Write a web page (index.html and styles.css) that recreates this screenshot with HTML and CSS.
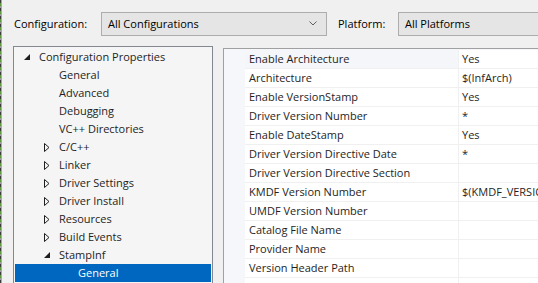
FILE: index.html
```html
<!DOCTYPE html>
<html lang="en">
<head>
  <meta charset="UTF-8">
  <title>Property Pages</title>
  <link rel="stylesheet" href="styles.css">
</head>
<body>

<div class="window">
  <div class="edge"></div>

  <div class="main">
    <div class="toolbar">
      <span class="label label-config">Configuration:</span>
      <div class="combo combo-config">
        <span>All Configurations</span>
        <svg class="chevron" width="8" height="5" viewBox="0 0 8 5">
          <polyline points="0.5,0.5 4,4 7.5,0.5" fill="none" stroke="#606060" stroke-width="1"/>
        </svg>
      </div>
      <span class="label label-platform">Platform:</span>
      <div class="combo combo-platform">
        <span>All Platforms</span>
      </div>
    </div>

    <div class="panes">
      <div class="tree">
        <div class="node lvl0"><span class="glyph"><svg width="6" height="6" viewBox="0 0 6 6"><polygon points="6,0 6,6 0,6" fill="#1e1e1e"/></svg></span>Configuration Properties</div>
        <div class="node lvl1"><span class="glyph"></span>General</div>
        <div class="node lvl1"><span class="glyph"></span>Advanced</div>
        <div class="node lvl1"><span class="glyph"></span>Debugging</div>
        <div class="node lvl1"><span class="glyph"></span>VC++ Directories</div>
        <div class="node lvl1"><span class="glyph"><svg width="6" height="9" viewBox="0 0 6 9"><polygon points="0.5,0.5 5,4.5 0.5,8.5" fill="none" stroke="#1e1e1e" stroke-width="1"/></svg></span>C/C++</div>
        <div class="node lvl1"><span class="glyph"><svg width="6" height="9" viewBox="0 0 6 9"><polygon points="0.5,0.5 5,4.5 0.5,8.5" fill="none" stroke="#1e1e1e" stroke-width="1"/></svg></span>Linker</div>
        <div class="node lvl1"><span class="glyph"><svg width="6" height="9" viewBox="0 0 6 9"><polygon points="0.5,0.5 5,4.5 0.5,8.5" fill="none" stroke="#1e1e1e" stroke-width="1"/></svg></span>Driver Settings</div>
        <div class="node lvl1"><span class="glyph"><svg width="6" height="9" viewBox="0 0 6 9"><polygon points="0.5,0.5 5,4.5 0.5,8.5" fill="none" stroke="#1e1e1e" stroke-width="1"/></svg></span>Driver Install</div>
        <div class="node lvl1"><span class="glyph"><svg width="6" height="9" viewBox="0 0 6 9"><polygon points="0.5,0.5 5,4.5 0.5,8.5" fill="none" stroke="#1e1e1e" stroke-width="1"/></svg></span>Resources</div>
        <div class="node lvl1"><span class="glyph"><svg width="6" height="9" viewBox="0 0 6 9"><polygon points="0.5,0.5 5,4.5 0.5,8.5" fill="none" stroke="#1e1e1e" stroke-width="1"/></svg></span>Build Events</div>
        <div class="node lvl1"><span class="glyph"><svg width="6" height="6" viewBox="0 0 6 6"><polygon points="6,0 6,6 0,6" fill="#1e1e1e"/></svg></span>StampInf</div>
        <div class="node lvl2 selected"><span class="glyph"></span>General</div>
      </div>

      <div class="grid">
        <div class="row first"><div class="name">Enable Architecture</div><div class="value">Yes</div></div>
        <div class="row"><div class="name">Architecture</div><div class="value">$(InfArch)</div></div>
        <div class="row"><div class="name">Enable VersionStamp</div><div class="value">Yes</div></div>
        <div class="row"><div class="name">Driver Version Number</div><div class="value">*</div></div>
        <div class="row"><div class="name">Enable DateStamp</div><div class="value">Yes</div></div>
        <div class="row"><div class="name">Driver Version Directive Date</div><div class="value">*</div></div>
        <div class="row"><div class="name">Driver Version Directive Section</div><div class="value"></div></div>
        <div class="row"><div class="name">KMDF Version Number</div><div class="value">$(KMDF_VERSION_MAJOR).$(KMDF_VERSION_MINOR)</div></div>
        <div class="row"><div class="name">UMDF Version Number</div><div class="value"></div></div>
        <div class="row"><div class="name">Catalog File Name</div><div class="value"></div></div>
        <div class="row"><div class="name">Provider Name</div><div class="value"></div></div>
        <div class="row"><div class="name">Version Header Path</div><div class="value"></div></div>
        <div class="row"><div class="name">Verbose Output</div><div class="value"></div></div>
      </div>
    </div>
  </div>
</div>

</body>
</html>
```

FILE: styles.css
```css
body {
  margin: 0;
  padding: 0;
  background-color: #f0f0f0;
  font-family: "Open Sans", "Noto Sans", sans-serif;
  font-size: 11px;
  color: #1e1e1e;
}

.window {
  display: flex;
  width: 538px;
  height: 283px;
  overflow: hidden;
}

/* thin strip of the neighbouring window at the left edge */
.edge {
  width: 1px;
  flex-shrink: 0;
  background: repeating-linear-gradient(#3d3d3d 0 3px, #5d9a3c 3px 6px, #9a9a9a 6px 8px);
  border-right: 1px solid #e8a317;
}

.main {
  flex: 1;
  min-width: 0;
  overflow: hidden;
}

.toolbar {
  display: flex;
  align-items: center;
  padding: 12px 0 0 12px;
  white-space: nowrap;
}

.toolbar > * {
  flex-shrink: 0;
}

.label {
  color: #000;
  padding-bottom: 1px;
}

.label-config {
  width: 87px;
}

.label-platform {
  width: 60px;
  margin-left: 11px;
}

.combo {
  display: flex;
  align-items: center;
  box-sizing: border-box;
  height: 24px;
  padding: 0 6px 1px 6px;
  background-color: #e5e5e5;
  border: 1px solid #adadad;
  color: #000;
}

.combo-config {
  width: 226px;
  justify-content: space-between;
}

.combo-config .chevron {
  margin-right: 3px;
}

.combo-platform {
  width: 200px;
}

.panes {
  display: flex;
  align-items: flex-start;
  margin-top: 10px;
}

/* Category tree on the left */
.tree {
  box-sizing: border-box;
  width: 200px;
  height: 260px;
  margin-left: 11px;
  padding: 1px 1px 0 1px;
  background-color: #f5f5f5;
  border: 1px solid #828790;
  flex-shrink: 0;
}

.node {
  display: flex;
  align-items: center;
  box-sizing: border-box;
  height: 18px;
  padding-bottom: 2px;
  white-space: nowrap;
}

.node .glyph {
  display: flex;
  align-items: center;
  width: 15px;
  flex-shrink: 0;
  margin-top: 2px;
}

.lvl0 { padding-left: 9px; }
.lvl1 { padding-left: 29px; }
.lvl2 { padding-left: 48px; }

.node.selected {
  background-color: #0067c0;
  color: #fff;
}

/* Property grid on the right */
.grid {
  box-sizing: border-box;
  width: 330px;
  height: 240px;
  margin-left: 10px;
  margin-top: 2px;
  padding: 1px 0 0 21px;
  background-color: #f5f7fa;
  border: 1px solid #a0a0a0;
  border-right: none;
  flex-shrink: 0;
}

.row {
  display: flex;
  height: 19px;
  box-sizing: border-box;
  border-bottom: 1px solid #f0f0f0;
  background-color: #fff;
  white-space: nowrap;
}

.row .name {
  width: 214px;
  padding: 0 0 2px 4px;
  box-sizing: border-box;
  display: flex;
  align-items: center;
  border-right: 1px solid #f0f0f0;
}

.row .value {
  flex: 1;
  padding: 0 0 2px 3px;
  display: flex;
  align-items: center;
  overflow: hidden;
}

.row.first .name {
  background-color: #f4f6fa;
}
```
